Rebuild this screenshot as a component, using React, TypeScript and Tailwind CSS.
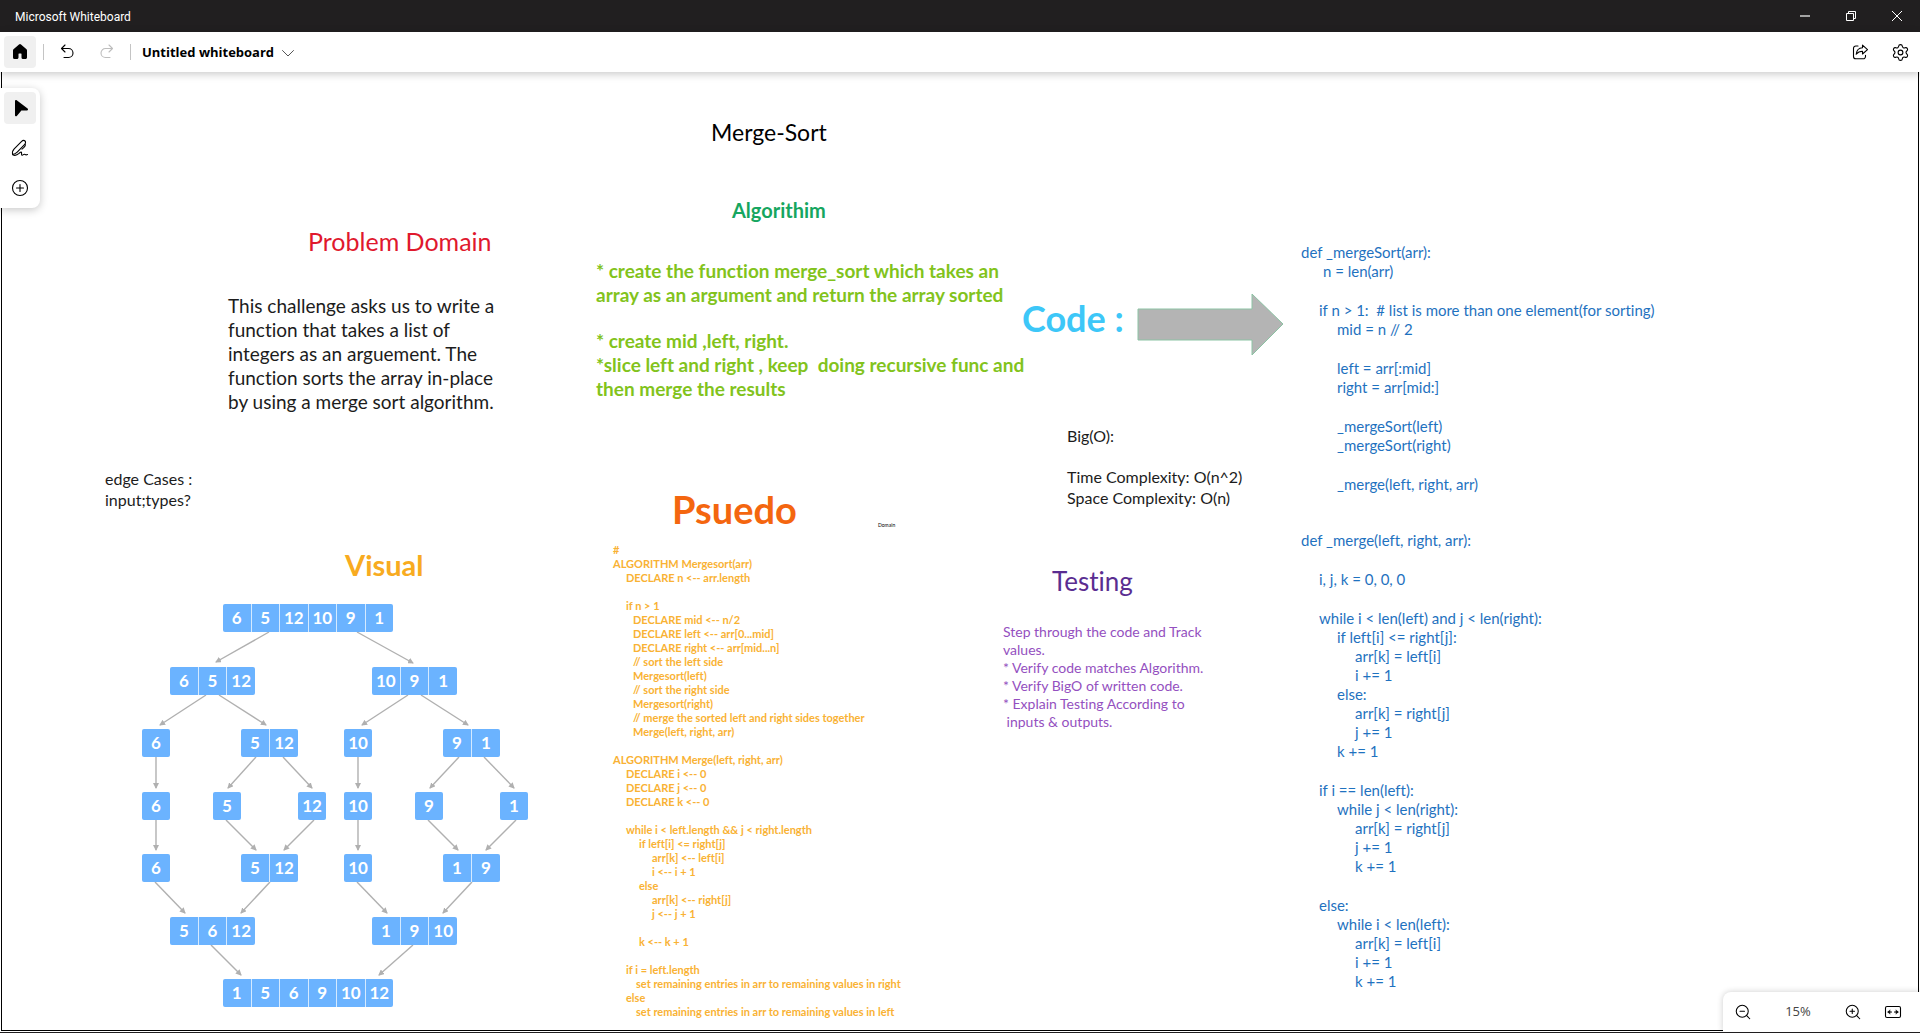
import type { ReactNode } from "react";
import { Settings, ZoomIn, ZoomOut } from "lucide-react";

type Line = [indent: string, text: string];

const pseudo: Line[][] = [
  [
    ["", "#"],
    ["", "ALGORITHM Mergesort(arr)"],
    ["pl-[13px]", "DECLARE n <-- arr.length"],
  ],
  [
    ["pl-[13px]", "if n > 1"],
    ["pl-5", "DECLARE mid <-- n/2"],
    ["pl-5", "DECLARE left <-- arr[0...mid]"],
    ["pl-5", "DECLARE right <-- arr[mid...n]"],
    ["pl-5", "// sort the left side"],
    ["pl-5", "Mergesort(left)"],
    ["pl-5", "// sort the right side"],
    ["pl-5", "Mergesort(right)"],
    ["pl-5", "// merge the sorted left and right sides together"],
    ["pl-5", "Merge(left, right, arr)"],
  ],
  [
    ["", "ALGORITHM Merge(left, right, arr)"],
    ["pl-[13px]", "DECLARE i <-- 0"],
    ["pl-[13px]", "DECLARE j <-- 0"],
    ["pl-[13px]", "DECLARE k <-- 0"],
  ],
  [
    ["pl-[13px]", "while i < left.length && j < right.length"],
    ["pl-[26px]", "if left[i] <= right[j]"],
    ["pl-[39px]", "arr[k] <-- left[i]"],
    ["pl-[39px]", "i <-- i + 1"],
    ["pl-[26px]", "else"],
    ["pl-[39px]", "arr[k] <-- right[j]"],
    ["pl-[39px]", "j <-- j + 1"],
  ],
  [["pl-[26px]", "k <-- k + 1"]],
  [
    ["pl-[13px]", "if i = left.length"],
    ["pl-[23px]", "set remaining entries in arr to remaining values in right"],
    ["pl-[13px]", "else"],
    ["pl-[23px]", "set remaining entries in arr to remaining values in left"],
  ],
];

const mergeSort: Line[][] = [
  [
    ["", "def _mergeSort(arr):"],
    ["pl-[22px]", "n = len(arr)"],
  ],
  [
    ["pl-[18px]", "if n > 1:  # list is more than one element(for sorting)"],
    ["pl-[36px]", "mid = n // 2"],
  ],
  [
    ["pl-[36px]", "left = arr[:mid]"],
    ["pl-[36px]", "right = arr[mid:]"],
  ],
  [
    ["pl-[36px]", "_mergeSort(left)"],
    ["pl-[36px]", "_mergeSort(right)"],
  ],
  [["pl-[36px]", "_merge(left, right, arr)"]],
];

const merge: Line[][] = [
  [["", "def _merge(left, right, arr):"]],
  [["pl-[18px]", "i, j, k = 0, 0, 0"]],
  [
    ["pl-[18px]", "while i < len(left) and j < len(right):"],
    ["pl-[36px]", "if left[i] <= right[j]:"],
    ["pl-[54px]", "arr[k] = left[i]"],
    ["pl-[54px]", "i += 1"],
    ["pl-[36px]", "else:"],
    ["pl-[54px]", "arr[k] = right[j]"],
    ["pl-[54px]", "j += 1"],
    ["pl-[36px]", "k += 1"],
  ],
  [
    ["pl-[18px]", "if i == len(left):"],
    ["pl-[36px]", "while j < len(right):"],
    ["pl-[54px]", "arr[k] = right[j]"],
    ["pl-[54px]", "j += 1"],
    ["pl-[54px]", "k += 1"],
  ],
  [
    ["pl-[18px]", "else:"],
    ["pl-[36px]", "while i < len(left):"],
    ["pl-[54px]", "arr[k] = left[i]"],
    ["pl-[54px]", "i += 1"],
    ["pl-[54px]", "k += 1"],
  ],
];

const plain = (...texts: string[]): Line[] => texts.map((t) => ["", t]);

function Note({ className, blocks }: { className: string; blocks: Line[][] }) {
  return (
    <div className={`absolute flex flex-col whitespace-pre ${className}`}>
      {blocks.map((block, b) => (
        <div key={b}>
          {block.map(([indent, text], i) => (
            <p key={i} className={indent}>
              {text}
            </p>
          ))}
        </div>
      ))}
    </div>
  );
}

/* Merge-sort tree: every node is placed inside the drawing's own 386x404 area. */
const nodes: [x: number, y: number, values: number[]][] = [
  [81, 0, [6, 5, 12, 10, 9, 1]],
  [28, 63, [6, 5, 12]],
  [230, 63, [10, 9, 1]],
  [0, 125, [6]],
  [99, 125, [5, 12]],
  [202, 125, [10]],
  [301, 125, [9, 1]],
  [0, 188, [6]],
  [71, 188, [5]],
  [156, 188, [12]],
  [202, 188, [10]],
  [273, 188, [9]],
  [358, 188, [1]],
  [0, 250, [6]],
  [99, 250, [5, 12]],
  [202, 250, [10]],
  [301, 250, [1, 9]],
  [28, 313, [5, 6, 12]],
  [230, 313, [1, 9, 10]],
  [81, 375, [1, 5, 6, 9, 10, 12]],
];

const nodeWidth: Record<number, string> = {
  1: "w-7",
  2: "w-[57px]",
  3: "w-[85px]",
  6: "w-[170px]",
};

const edges = [
  [127, 28, 74, 58], [215, 28, 271, 59],
  [64, 91, 18, 121], [77, 91, 124, 121], [266, 91, 220, 121], [279, 91, 326, 121],
  [14, 153, 14, 184], [114, 153, 86, 184], [141, 153, 170, 184],
  [216, 153, 216, 184], [317, 153, 288, 184], [342, 153, 372, 184],
  [14, 216, 14, 246], [84, 216, 114, 246], [172, 216, 142, 246],
  [216, 216, 216, 246], [286, 216, 316, 246], [374, 216, 344, 246],
  [13, 278, 43, 309], [128, 278, 99, 309], [215, 278, 245, 309], [330, 278, 301, 309],
  [69, 341, 99, 371], [271, 341, 237, 371],
];

function Tree() {
  return (
    <div className="absolute left-[142px] top-[532px] h-[404px] w-[386px]">
      <svg className="absolute inset-0 h-full w-full overflow-visible" viewBox="0 0 386 404" aria-hidden="true">
        <defs>
          <marker id="tip" viewBox="0 0 6 6" refX="5" refY="3" markerWidth="6" markerHeight="6" markerUnits="userSpaceOnUse" orient="auto">
            <path d="M0 0 6 3 0 6z" fill="#b0b0b0" />
          </marker>
        </defs>
        {edges.map(([x1, y1, x2, y2], i) => (
          <line key={i} x1={x1} y1={y1} x2={x2} y2={y2} stroke="#b0b0b0" strokeWidth="1.4" markerEnd="url(#tip)" />
        ))}
      </svg>
      {nodes.map(([x, y, values], i) => (
        <div
          key={i}
          style={{ left: x, top: y }}
          className={`absolute flex h-7 divide-x divide-[#d5eaff] overflow-hidden rounded-xs bg-[#6bb3ff] text-[17px] font-bold text-white ${nodeWidth[values.length]}`}
        >
          {values.map((v, j) => (
            <span key={j} className="flex flex-1 basis-0 items-center justify-center">
              {v}
            </span>
          ))}
        </div>
      ))}
    </div>
  );
}

function Icon({ children }: { children: ReactNode }) {
  return (
    <svg className="size-5" viewBox="0 0 20 20" fill="none" stroke="currentColor" strokeWidth="1.1" strokeLinecap="round" strokeLinejoin="round" aria-hidden="true">
      {children}
    </svg>
  );
}

function IconButton({ label, active, disabled, className = "", children }: { label: string; active?: boolean; disabled?: boolean; className?: string; children: ReactNode }) {
  return (
    <button
      type="button"
      aria-label={label}
      disabled={disabled}
      className={`flex size-8 shrink-0 items-center justify-center rounded ${active ? "bg-[#f0f0f0]" : ""} ${disabled ? "text-[#bdbdbd]" : "text-black"} ${className}`}
    >
      {children}
    </button>
  );
}

export default function App() {
  return (
    <div className="flex h-screen flex-col overflow-hidden border-b border-[#201e1f] bg-white font-['Open_Sans',sans-serif] text-black">
      <div className="flex h-8 shrink-0 items-center justify-between bg-[#211f20] text-white">
        <span className="pt-px pl-[15px] font-['Roboto',sans-serif] text-xs">Microsoft Whiteboard</span>
        <div className="flex">
          <button type="button" aria-label="Minimize" className="flex h-8 w-[46px] items-center justify-center text-[#a3a3a3]">
            <svg className="size-2.5" viewBox="0 0 10 10" fill="currentColor"><path d="M0 4h10v2H0z" /></svg>
          </button>
          <button type="button" aria-label="Restore" className="flex h-8 w-[46px] items-center justify-center">
            <svg className="size-2.5" viewBox="0 0 10 10" fill="none" stroke="currentColor"><path d="M.5 2.5h7v7h-7zM2.5 2.5v-2h7v7h-2" /></svg>
          </button>
          <button type="button" aria-label="Close" className="flex h-8 w-[46px] items-center justify-center">
            <svg className="size-2.5" viewBox="0 0 10 10" fill="none" stroke="currentColor"><path d="m0 0 10 10M10 0 0 10" /></svg>
          </button>
        </div>
      </div>

      <header className="z-10 flex h-10 shrink-0 items-center bg-white px-1 shadow-[0_2px_8px_rgba(0,0,0,0.22)]">
        <IconButton label="Home" active>
          <svg className="size-5" viewBox="0 0 20 20" fill="currentColor" aria-hidden="true">
            <path d="M9 2.39a1.5 1.5 0 0 1 2 0l5.5 4.94c.32.28.5.69.5 1.12v7.05c0 .83-.67 1.5-1.5 1.5H13a1.5 1.5 0 0 1-1.5-1.5V12a.5.5 0 0 0-.5-.5H9a.5.5 0 0 0-.5.5v3.5c0 .83-.67 1.5-1.5 1.5H4.5A1.5 1.5 0 0 1 3 15.5V8.45c0-.43.18-.84.5-1.12L9 2.39Z" />
          </svg>
        </IconButton>
        <span className="mx-[7px] h-4 w-px bg-[#c4c4c4]" />
        <IconButton label="Undo">
          <Icon><path d="M8 3 4.5 6.500 8 10M4.5 6.500h7a4.5 4.5 0 0 1 0 9H7" /></Icon>
        </IconButton>
        <IconButton label="Redo" disabled className="ml-2">
          <Icon><path d="m12 3 3.500 3.500L12 10M15.500 6.500h-7a4.5 4.5 0 0 0 0 9H13" /></Icon>
        </IconButton>
        <span className="mx-[7px] h-4 w-px bg-[#c4c4c4]" />
        <button type="button" className="ml-1 flex items-center gap-2 pt-px text-[13px] font-bold">
          Untitled whiteboard
          <svg className="h-2 w-3 text-[#555]" viewBox="0 0 12 8" fill="none" stroke="currentColor" strokeLinecap="round" aria-hidden="true"><path d="M.5 1.500 6 7l5.500-5.500" /></svg>
        </button>
        <div className="ml-auto flex gap-2">
          <IconButton label="Share">
            <Icon>
              <path d="M8 4H5.8a2.3 2.3 0 0 0-2.3 2.3v8.2a2.3 2.3 0 0 0 2.3 2.3h7.4a2.3 2.3 0 0 0 2.3-2.3v-1.2" />
              <path d="M12.5 3.2v2.6C8.8 6 6.6 8.3 6.2 12.2c1.6-2 3.6-2.9 6.3-2.9V12l5-4.4z" />
            </Icon>
          </IconButton>
          <IconButton label="Settings">
            <Settings size={19} strokeWidth={1.4} />
          </IconButton>
        </div>
      </header>

      <main className="relative flex flex-1 font-['Lato',sans-serif] [font-variant-ligatures:none]">
        <div className="mx-px mb-px flex-1 border-x border-b border-black" />

        <h1 className="absolute left-[711px] top-[44px] text-[23px] leading-8">Merge-Sort</h1>

        <h2 className="absolute left-[308px] top-[153px] text-[25px] leading-8 text-[#e0182d]">Problem Domain</h2>
        <Note
          className="left-[228px] top-[222px] text-[19px] leading-6 text-[#1c1c1c]"
          blocks={[plain("This challenge asks us to write a", "function that takes a list of", "integers as an arguement. The", "function sorts the array in-place", "by using a merge sort algorithm.")]}
        />
        <Note className="left-[105px] top-[396px] text-base leading-[21px] text-[#1c1c1c]" blocks={[plain("edge Cases :", "input;types?")]} />

        <h2 className="absolute left-[732px] top-[124px] text-xl leading-7 font-bold text-[#16a660]">Algorithim</h2>
        <Note
          className="left-[596px] top-[187px] gap-[22px] text-[19px] leading-6 font-bold text-[#82c31c]"
          blocks={[
            plain("* create the function merge_sort which takes an", "array as an argument and return the array sorted"),
            plain("* create mid ,left, right.", "*slice left and right , keep  doing recursive func and", "then merge the results"),
          ]}
        />

        <h2 className="absolute left-[345px] top-[475px] text-[29px] leading-9 font-bold text-[#f8ab20]">Visual</h2>
        <Tree />

        <h2 className="absolute left-[672px] top-[413px] text-[38px] leading-[48px] font-bold text-[#f4660f]">Psuedo</h2>
        <p className="absolute left-[878px] top-[450px] text-[5px] leading-[6px]">Domain</p>
        <Note className="left-[613px] top-[471px] gap-[14px] text-[11px] leading-[14px] font-bold text-[#f9b234]" blocks={pseudo} />

        <h2 className="absolute left-[1022px] top-[224px] text-4xl leading-[44px] font-bold text-[#3dc7f8]">Code :</h2>
        <svg className="absolute left-[1137px] top-[220px] h-16 w-[147px]" viewBox="0 0 147 64" aria-hidden="true">
          <path d="M1 17h114V2l31 30-31 31V48H1z" fill="#b4b4b4" stroke="#8cc3a4" strokeWidth="1" />
        </svg>

        <Note className="left-[1067px] top-[353px] gap-5 text-base leading-[21px] text-[#1c1c1c]" blocks={[plain("Big(O):"), plain("Time Complexity: O(n^2)", "Space Complexity: O(n)")]} />

        <h2 className="absolute left-[1052px] top-[493px] text-[26px] leading-8 text-[#5a2d91]">Testing</h2>
        <Note
          className="left-[1003px] top-[551px] text-sm leading-[18px] text-[#9450c0]"
          blocks={[plain("Step through the code and Track", "values.", "* Verify code matches Algorithm.", "* Verify BigO of written code.", "* Explain Testing According to", " inputs & outputs.")]}
        />

        <Note className="left-[1301px] top-[171px] gap-5 text-[15px] leading-[19px] text-[#1f72c0]" blocks={mergeSort} />
        <Note className="left-[1301px] top-[459px] gap-5 text-[15px] leading-[19px] text-[#1f72c0]" blocks={merge} />

        <nav aria-label="Tools" className="absolute left-0 top-4 flex flex-col gap-2 rounded-r-lg bg-white p-1 shadow-[0_2px_8px_rgba(0,0,0,0.22)]">
          <IconButton label="Select" active>
            <svg className="size-5" viewBox="0 0 20 20" fill="currentColor" aria-hidden="true">
              <path d="M5 3.1c0-.9 1-1.4 1.7-.8l10.9 8.3c.8.6.4 1.9-.6 1.9h-5.200c-.3 0-.6.1-.8.4l-4.200 5c-.6.7-1.8.3-1.8-.6z" />
            </svg>
          </IconButton>
          <IconButton label="Inking">
            <Icon>
              <path d="M2.7 16.500c-.7-2.300 0-4.200 1.500-5.700L11.400 3.600c1.100-1.100 2.700-1.500 3.600-.6s.6 2.600-.5 3.700L7.200 14.200c-1.300 1.300-2.700 2-4.500 2.300z" />
              <path d="M2.700 16.800c2.600 1.300 4.500.3 6.300-1.400 1-1.100 2.200-1.700 2.500-.9.4 1-.6 2.500.6 2.700 1 .2 1.500-1.200 2.400-1 .9.2.8 1.200 3 .4M15.300 6.600c.4 1.400-.9 2.600-3.300 4.600" />
            </Icon>
          </IconButton>
          <IconButton label="Create">
            <Icon><circle cx="10" cy="10" r="7.5" /><path d="M10 6.500v7M6.500 10h7" /></Icon>
          </IconButton>
        </nav>

        <div className="absolute right-0 bottom-0 flex items-center rounded-tl-lg bg-white py-1 pr-[11px] pl-1 font-['Open_Sans',sans-serif] shadow-[0_0_6px_rgba(0,0,0,0.2)]">
          <IconButton label="Zoom out"><ZoomOut size={18} strokeWidth={1.4} /></IconButton>
          <span className="w-[78px] text-center text-[13px] text-[#444]">15%</span>
          <IconButton label="Zoom in"><ZoomIn size={18} strokeWidth={1.4} /></IconButton>
          <IconButton label="Fit to screen" className="ml-2">
            <Icon>
              <rect x="2.5" y="4.5" width="15" height="11" rx="1.5" />
              <path d="M5 10h3.500M11.500 10H15" />
              <path d="M6.800 8 4.800 10l2 2zM13.200 8l2 2-2 2z" fill="currentColor" strokeWidth=".4" />
            </Icon>
          </IconButton>
        </div>
      </main>
    </div>
  );
}
